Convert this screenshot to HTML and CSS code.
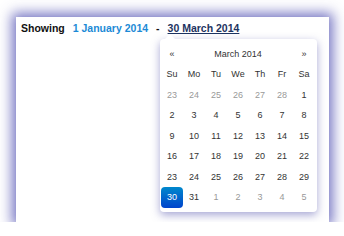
FILE: index.html
```html
<!DOCTYPE html>
<html lang="en">
<head>
    <meta charset="UTF-8">
    <meta name="viewport" content="width=device-width, initial-scale=1.0">
    <link rel="stylesheet" href="styles.css">
</head>
<body>
    <div class="panel">
        <div class="range">
            <span class="label">Showing</span>
            <span class="from">1 January 2014</span>
            <span class="dash">-</span>
            <span class="to">30 March 2014</span>
        </div>

        <div class="datepicker">
            <div class="dp-head">
                <span>&laquo;</span>
                <span class="dp-title">March 2014</span>
                <span>&raquo;</span>
            </div>
            <div class="dp-grid">
                <span class="dow">Su</span><span class="dow">Mo</span><span class="dow">Tu</span><span class="dow">We</span><span class="dow">Th</span><span class="dow">Fr</span><span class="dow">Sa</span>

                <span class="old">23</span><span class="old">24</span><span class="old">25</span><span class="old">26</span><span class="old">27</span><span class="old">28</span><span>1</span>
                <span>2</span><span>3</span><span>4</span><span>5</span><span>6</span><span>7</span><span>8</span>
                <span>9</span><span>10</span><span>11</span><span>12</span><span>13</span><span>14</span><span>15</span>
                <span>16</span><span>17</span><span>18</span><span>19</span><span>20</span><span>21</span><span>22</span>
                <span>23</span><span>24</span><span>25</span><span>26</span><span>27</span><span>28</span><span>29</span>
                <span class="active">30</span><span>31</span><span class="old">1</span><span class="old">2</span><span class="old">3</span><span class="old">4</span><span class="old">5</span>
            </div>
        </div>
    </div>
</body>
</html>
```

FILE: styles.css
```css
body {
    margin: 0;
    background-color: #fff;
    font-family: "Liberation Sans", Arial, sans-serif;
}

.panel {
    position: relative;
    width: 313px;
    height: 205px;
    margin: 17px 0 0 16px;
    background-color: #fff;
    box-shadow: 0 0 12px 4px rgba(95, 95, 185, 0.85); /* purple glow */
}

.range {
    display: flex;
    gap: 8px;
    padding: 4px 0 0 5px;
    font-size: 10.5px;
    font-weight: bold;
    line-height: 14px;
    color: #111;
}

.from {
    color: #1c8ad6;
}

.to {
    color: #1d3461;
    text-decoration: underline;
}

/* popup calendar hanging under the end date */
.datepicker {
    position: absolute;
    top: 22px;
    left: 144px;
    width: 154px;
    padding: 5px 2px 4px 1px;
    background-color: #fff;
    border-radius: 4px;
    box-shadow: 0 3px 8px rgba(80, 80, 170, 0.5);
    font-size: 9px;
    color: #333;
}

.datepicker::before {
    content: "";
    position: absolute;
    top: -5px;
    left: 5px;
    border-left: 5px solid transparent;
    border-right: 5px solid transparent;
    border-bottom: 5px solid #fff;
}

.dp-head {
    display: grid;
    grid-template-columns: 22px 1fr 22px;
    height: 20px;
    align-items: center;
    text-align: center;
}

.dp-grid {
    display: grid;
    grid-template-columns: repeat(7, 22px);
    grid-auto-rows: 20.5px;
}

.dp-grid span {
    display: flex;
    align-items: center;
    justify-content: center;
    border-radius: 4px;
}

.dp-grid .old {
    color: #999;
}

.dp-grid .active {
    color: #fff;
    background: linear-gradient(#0088cc, #0044cc);
}
```
